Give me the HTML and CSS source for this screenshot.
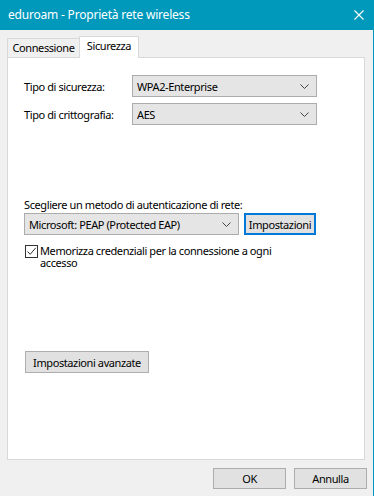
FILE: index.html
```html
<!DOCTYPE html>
<html lang="it">
<head>
<meta charset="utf-8">
<title>eduroam - Proprietà rete wireless</title>
<link rel="stylesheet" href="styles.css">
</head>
<body>
<div class="window">
  <div class="titlebar">
    <span class="title">eduroam - Proprietà rete wireless</span>
    <svg class="close" width="10" height="10" viewBox="0 0 10 10"><path d="M0.5 0.5 L9.5 9.5 M9.5 0.5 L0.5 9.5" stroke="#fff" stroke-width="1.1" fill="none"/></svg>
  </div>
  <div class="main">
    <div class="tabs">
      <div class="tab tab-conn">Connessione</div>
      <div class="tab tab-sel">Sicurezza</div>
    </div>
    <div class="panel">
      <div class="grid">
        <label class="lbl">Tipo di sicurezza:</label>
        <div class="select"><span>WPA2-Enterprise</span><svg class="chev" width="9" height="5" viewBox="0 0 9 5"><path d="M0.5 0.5 L4.5 4.5 L8.5 0.5" stroke="#444" stroke-width="1" fill="none"/></svg></div>
        <label class="lbl">Tipo di crittografia:</label>
        <div class="select"><span>AES</span><svg class="chev" width="9" height="5" viewBox="0 0 9 5"><path d="M0.5 0.5 L4.5 4.5 L8.5 0.5" stroke="#444" stroke-width="1" fill="none"/></svg></div>
      </div>
      <div class="method-label">Scegliere un metodo di autenticazione di rete:</div>
      <div class="method-row">
        <div class="select select-method"><span>Microsoft: PEAP (Protected EAP)</span><svg class="chev" width="9" height="5" viewBox="0 0 9 5"><path d="M0.5 0.5 L4.5 4.5 L8.5 0.5" stroke="#444" stroke-width="1" fill="none"/></svg></div>
        <button class="btn btn-focus">Impostazioni</button>
      </div>
      <div class="check-row">
        <span class="checkbox"><svg width="11" height="11" viewBox="0 0 11 11"><path d="M1.5 5.5 L4.2 8.3 L9.8 1.8" stroke="#333" stroke-width="1" fill="none"/></svg></span>
        <span class="check-text">Memorizza credenziali per la connessione a ogni accesso</span>
      </div>
      <button class="btn btn-adv">Impostazioni avanzate</button>
    </div>
    <div class="footer">
      <button class="btn btn-foot">OK</button>
      <button class="btn btn-foot">Annulla</button>
    </div>
  </div>
</div>
</body>
</html>
```
FILE: styles.css
```css
* { box-sizing: border-box; }
html, body { margin: 0; padding: 0; }
body {
  width: 374px;
  height: 496px;
  background: #f0f0f0;
  font-family: "Noto Sans", "Liberation Sans", sans-serif;
  font-size: 11px;
  letter-spacing: -0.4px;
  color: #000;
  overflow: hidden;
}
.window {
  width: 374px;
  height: 496px;
  border-right: 1px solid #0099bc;
  display: flex;
  flex-direction: column;
}
.titlebar {
  height: 30px;
  background: #0099bc;
  color: #fff;
  display: flex;
  align-items: center;
  justify-content: space-between;
  padding: 0 9px 1px 8px;
  flex: none;
}
.title { font-size: 12px; letter-spacing: -0.2px; line-height: 15px; }
.close { display: block; }
.main {
  padding: 0 8px 0 7px;
  display: flex;
  flex-direction: column;
}
.tabs {
  margin-top: 6px;
  height: 21px;
  display: flex;
  align-items: flex-end;
}
.tab {
  border: 1px solid #d9d9d9;
  border-bottom: none;
  height: 19px;
  line-height: 17px;
  text-align: center;
  background: #f0f0f0;
}
.tab-conn { width: 73px; }
.tab-sel {
  width: 60px;
  margin-left: -1px;
  height: 22px;
  margin-bottom: -1px;
  line-height: 18px;
  background: #fff;
  position: relative;
  z-index: 1;
}
.panel {
  width: 358px;
  height: 403px;
  background: #fff;
  border: 1px solid #d9d9d9;
  padding: 17px 16px 0 16px;
  display: flex;
  flex-direction: column;
  align-items: flex-start;
}
.grid {
  display: grid;
  grid-template-columns: 108px 185px;
  row-gap: 6px;
  align-items: center;
}
.select {
  height: 22px;
  background: #e5e5e5;
  border: 1px solid #acacac;
  display: flex;
  align-items: center;
  justify-content: space-between;
  padding: 0 7px 0 4px;
  line-height: 15px;
}
.chev { display: block; }
.method-label {
  margin-top: 72px;
  line-height: 15px;
}
.method-row {
  margin-top: 1px;
  display: flex;
  gap: 5px;
}
.select-method { width: 215px; }
.btn {
  font-family: inherit;
  font-size: 11px;
  letter-spacing: -0.4px;
  color: #000;
  background: #e1e1e1;
  border: 1px solid #adadad;
  height: 22px;
  padding: 0;
  line-height: 15px;
  border-radius: 0;
}
.btn-focus {
  width: 72px;
  border: 2px solid #0078d7;
}
.check-row {
  margin-top: 10px;
  display: flex;
  align-items: flex-start;
  margin-left: 1px;
}
.checkbox {
  width: 13px;
  height: 13px;
  border: 1px solid #333;
  background: #fff;
  flex: none;
  display: flex;
  align-items: center;
  justify-content: center;
}
.checkbox svg { display: block; }
.check-text {
  margin-left: 2px;
  width: 236px;
  line-height: 12px;
}
.btn-adv {
  margin-top: 82px;
  margin-left: 1px;
  width: 124px;
}
.footer {
  margin-top: 8px;
  display: flex;
  justify-content: flex-end;
  gap: 8px;
  margin-right: -2px;
}
.btn-foot {
  width: 73px;
  height: 21px;
}
```
